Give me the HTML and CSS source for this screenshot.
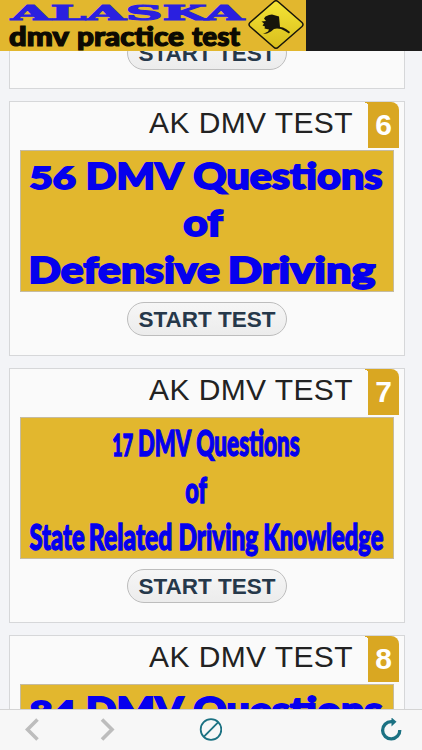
FILE: index.html
```html
<!DOCTYPE html>
<html lang="en">
<head>
    <meta charset="UTF-8">
    <title>Alaska DMV Practice Test</title>
    <link rel="stylesheet" href="styles.css">
</head>
<body>
<div class="header">
    <svg class="logo" width="306" height="51" viewBox="0 0 306 51">
        <defs>
            <linearGradient id="sign" x1="0" y1="0" x2="0" y2="1">
                <stop offset="0" stop-color="#f5e536"/>
                <stop offset="1" stop-color="#d8bd1c"/>
            </linearGradient>
        </defs>
        <text class="logo-name" x="11" y="20" textLength="233" lengthAdjust="spacingAndGlyphs">ALASKA</text>
        <g class="logo-sub">
            <text x="9" y="45.500" textLength="60" lengthAdjust="spacingAndGlyphs">dmv</text>
            <text x="77" y="45.500" textLength="107" lengthAdjust="spacingAndGlyphs">practice</text>
            <text x="192" y="45.500" textLength="48" lengthAdjust="spacingAndGlyphs">test</text>
        </g>
        <path d="M273.500 2Q276 -.5 278.500 2L302 22.500Q304 24.500 302 26.500L278.500 47Q276 49.500 273.500 47L250 26.500Q248 24.500 250 22.500Z" fill="url(#sign)" stroke="#17150b" stroke-width="1.500"/>
        <path d="M265.500 16.500L269 15L272 14.500L279 16.500L280 27L283 27.500L286 29L290 32L289 33.500L285 31L281 29L277 28.500L274 29L271 31.500L267 33.500L263 34L268 31.500L269 29.500L264.500 28.500L265 26.500L262.500 25.500L264 23.500L261.500 21.500L266 21L264 18.500Z" fill="#17150b"/>
    </svg>
</div>
<div class="main">
    <div class="card card-end">
        <button class="start">START TEST</button>
    </div>
    <div class="card">
        <div class="card-head">
            <h3 class="title">AK DMV TEST</h3>
            <span class="number">6</span>
        </div>
        <svg class="banner" width="374" height="142" viewBox="0 0 374 142">
            <text class="digits" x="7" y="38.500" textLength="47" lengthAdjust="spacingAndGlyphs">56</text>
            <text x="64" y="38.500" textLength="99" lengthAdjust="spacingAndGlyphs">DMV</text>
            <text x="173" y="38.500" textLength="192" lengthAdjust="spacingAndGlyphs">Questions</text>
            <text x="163" y="86" textLength="40" lengthAdjust="spacingAndGlyphs">of</text>
            <text x="6" y="133.500" textLength="194" lengthAdjust="spacingAndGlyphs">Defensive</text>
            <text x="208" y="133.500" textLength="150" lengthAdjust="spacingAndGlyphs">Driving</text>
        </svg>
        <button class="start">START TEST</button>
    </div>
    <div class="card">
        <div class="card-head">
            <h3 class="title">AK DMV TEST</h3>
            <span class="number">7</span>
        </div>
        <svg class="banner narrow" width="374" height="142" viewBox="0 0 374 142">
            <text class="digits" x="91" y="38.500" textLength="21" lengthAdjust="spacingAndGlyphs">17</text>
            <text x="117" y="38.500" textLength="54" lengthAdjust="spacingAndGlyphs">DMV</text>
            <text x="176" y="38.500" textLength="105" lengthAdjust="spacingAndGlyphs">Questions</text>
            <text x="165" y="86" textLength="22" lengthAdjust="spacingAndGlyphs">of</text>
            <text x="7" y="133.500" textLength="56" lengthAdjust="spacingAndGlyphs">State</text>
            <text x="67" y="133.500" textLength="85" lengthAdjust="spacingAndGlyphs">Related</text>
            <text x="158" y="133.500" textLength="81" lengthAdjust="spacingAndGlyphs">Driving</text>
            <text x="244" y="133.500" textLength="122" lengthAdjust="spacingAndGlyphs">Knowledge</text>
        </svg>
        <button class="start">START TEST</button>
    </div>
    <div class="card">
        <div class="card-head">
            <h3 class="title">AK DMV TEST</h3>
            <span class="number">8</span>
        </div>
        <svg class="banner" width="374" height="142" viewBox="0 0 374 142">
            <text class="digits" x="7" y="38.500" textLength="47" lengthAdjust="spacingAndGlyphs">84</text>
            <text x="64" y="38.500" textLength="99" lengthAdjust="spacingAndGlyphs">DMV</text>
            <text x="173" y="38.500" textLength="192" lengthAdjust="spacingAndGlyphs">Questions</text>
        </svg>
    </div>
</div>
<div class="toolbar">
    <svg width="16" height="24" viewBox="0 0 16 24"><path d="M12.500 1.500L2.500 11.500l10 10" fill="none" stroke="#bdbdbd" stroke-width="3.600"/></svg>
    <svg width="16" height="24" viewBox="0 0 16 24"><path d="M2 1.500l10 10-10 10" fill="none" stroke="#bdbdbd" stroke-width="3.600"/></svg>
    <svg width="24" height="24" viewBox="0 0 24 24"><circle cx="13" cy="11.500" r="10.300" fill="none" stroke="#1b7182" stroke-width="1.800"/><path d="M5.700 18.800L20.300 4.200" stroke="#1b7182" stroke-width="1.800"/></svg>
    <svg width="24" height="24" viewBox="0 0 24 24"><path d="M20.800 12A8.600 8.600 0 1 1 12.200 3.700H14" fill="none" stroke="#1b7182" stroke-width="3.300"/><path d="M12.500 -.5l5 4.200-5 4.800z" fill="#1b7182"/></svg>
</div>
</body>
</html>
```

FILE: styles.css
```css
* {
    padding: 0;
    margin: 0;
    box-sizing: border-box;
}

body {
    height: 750px;
    overflow: hidden;
    display: flex;
    flex-direction: column;
    background: #f3f4f7;
    font-family: "Liberation Sans", Arial, sans-serif;
}

.header {
    flex: none;
    height: 51px;
    background: #1b1b1b;
}

.logo {
    display: block;
    background: #e2b72e;
}

.logo-name {
    font: bold 21px "DejaVu Serif", serif;
    fill: #2a20e0;
    stroke: #2a20e0;
    stroke-width: 1.1;
}

.logo-sub {
    font: 900 26px Lato, sans-serif;
    fill: #0c0a02;
    stroke: #0c0a02;
    stroke-width: 1.2;
}

.main {
    flex: 1;
    min-height: 0;
    overflow: hidden;
    padding: 0 17px 0 9px;
}

.card {
    display: flex;
    flex-direction: column;
    height: 255px;
    margin-bottom: 12px;
    padding: 0 5px 0 10px;
    border: 1px solid #d6d7d9;
    background: #fafafa;
}

/* scrolled under the header */
.card-end {
    height: 53px;
    margin-top: -15px;
    border-top: 0;
}

.card-end .start {
    margin-top: 0;
}

.card-head {
    display: flex;
    justify-content: flex-end;
    height: 48px;
}

.title {
    margin-right: 12px;
    font-size: 30px;
    font-weight: normal;
    line-height: 42px;
    letter-spacing: .4px;
    color: #222;
}

/* small curl left of the number */
.number:before {
    content: "";
    float: left;
    width: 3px;
    height: 46px;
    background: radial-gradient(circle at 0 4px, #fafafa 3px, #d9a722 3.5px) no-repeat 0 0 / 3px 4px #fafafa;
}

.number {
    width: 34px;
    height: 46px;
    border-radius: 0 8px 0 0;
    background: #d9a722;
    color: #fff;
    font-size: 30px;
    font-weight: bold;
    line-height: 45px;
    text-align: center;
}

.banner {
    flex: none;
    border: 1px solid #c5bba0;
    background: #e2b72e;
    font: 900 37px Lato, sans-serif;
    fill: #0500ee;
    stroke: #0500ee;
    stroke-width: 1.8;
}

.narrow {
    stroke-width: 1.4;
}

.digits {
    font-size: 31px;
}

.start {
    flex: none;
    width: 160px;
    height: 34px;
    margin: 10px 0 0 107px;
    padding-top: 1px;
    border: 1px solid #bdbdbd;
    border-radius: 17px;
    background: linear-gradient(#f6f6f6, #ececec);
    color: #26384a;
    font: bold 22.5px "Liberation Sans", Arial, sans-serif;
    white-space: nowrap;
}

.toolbar {
    flex: none;
    display: grid;
    grid-template-columns: 75px 98px 181px 24px;
    align-items: start;
    height: 41px;
    padding: 8px 0 0 25px;
    border-top: 1px solid #d4d4d4;
    background: #f7f7f7;
}
```
